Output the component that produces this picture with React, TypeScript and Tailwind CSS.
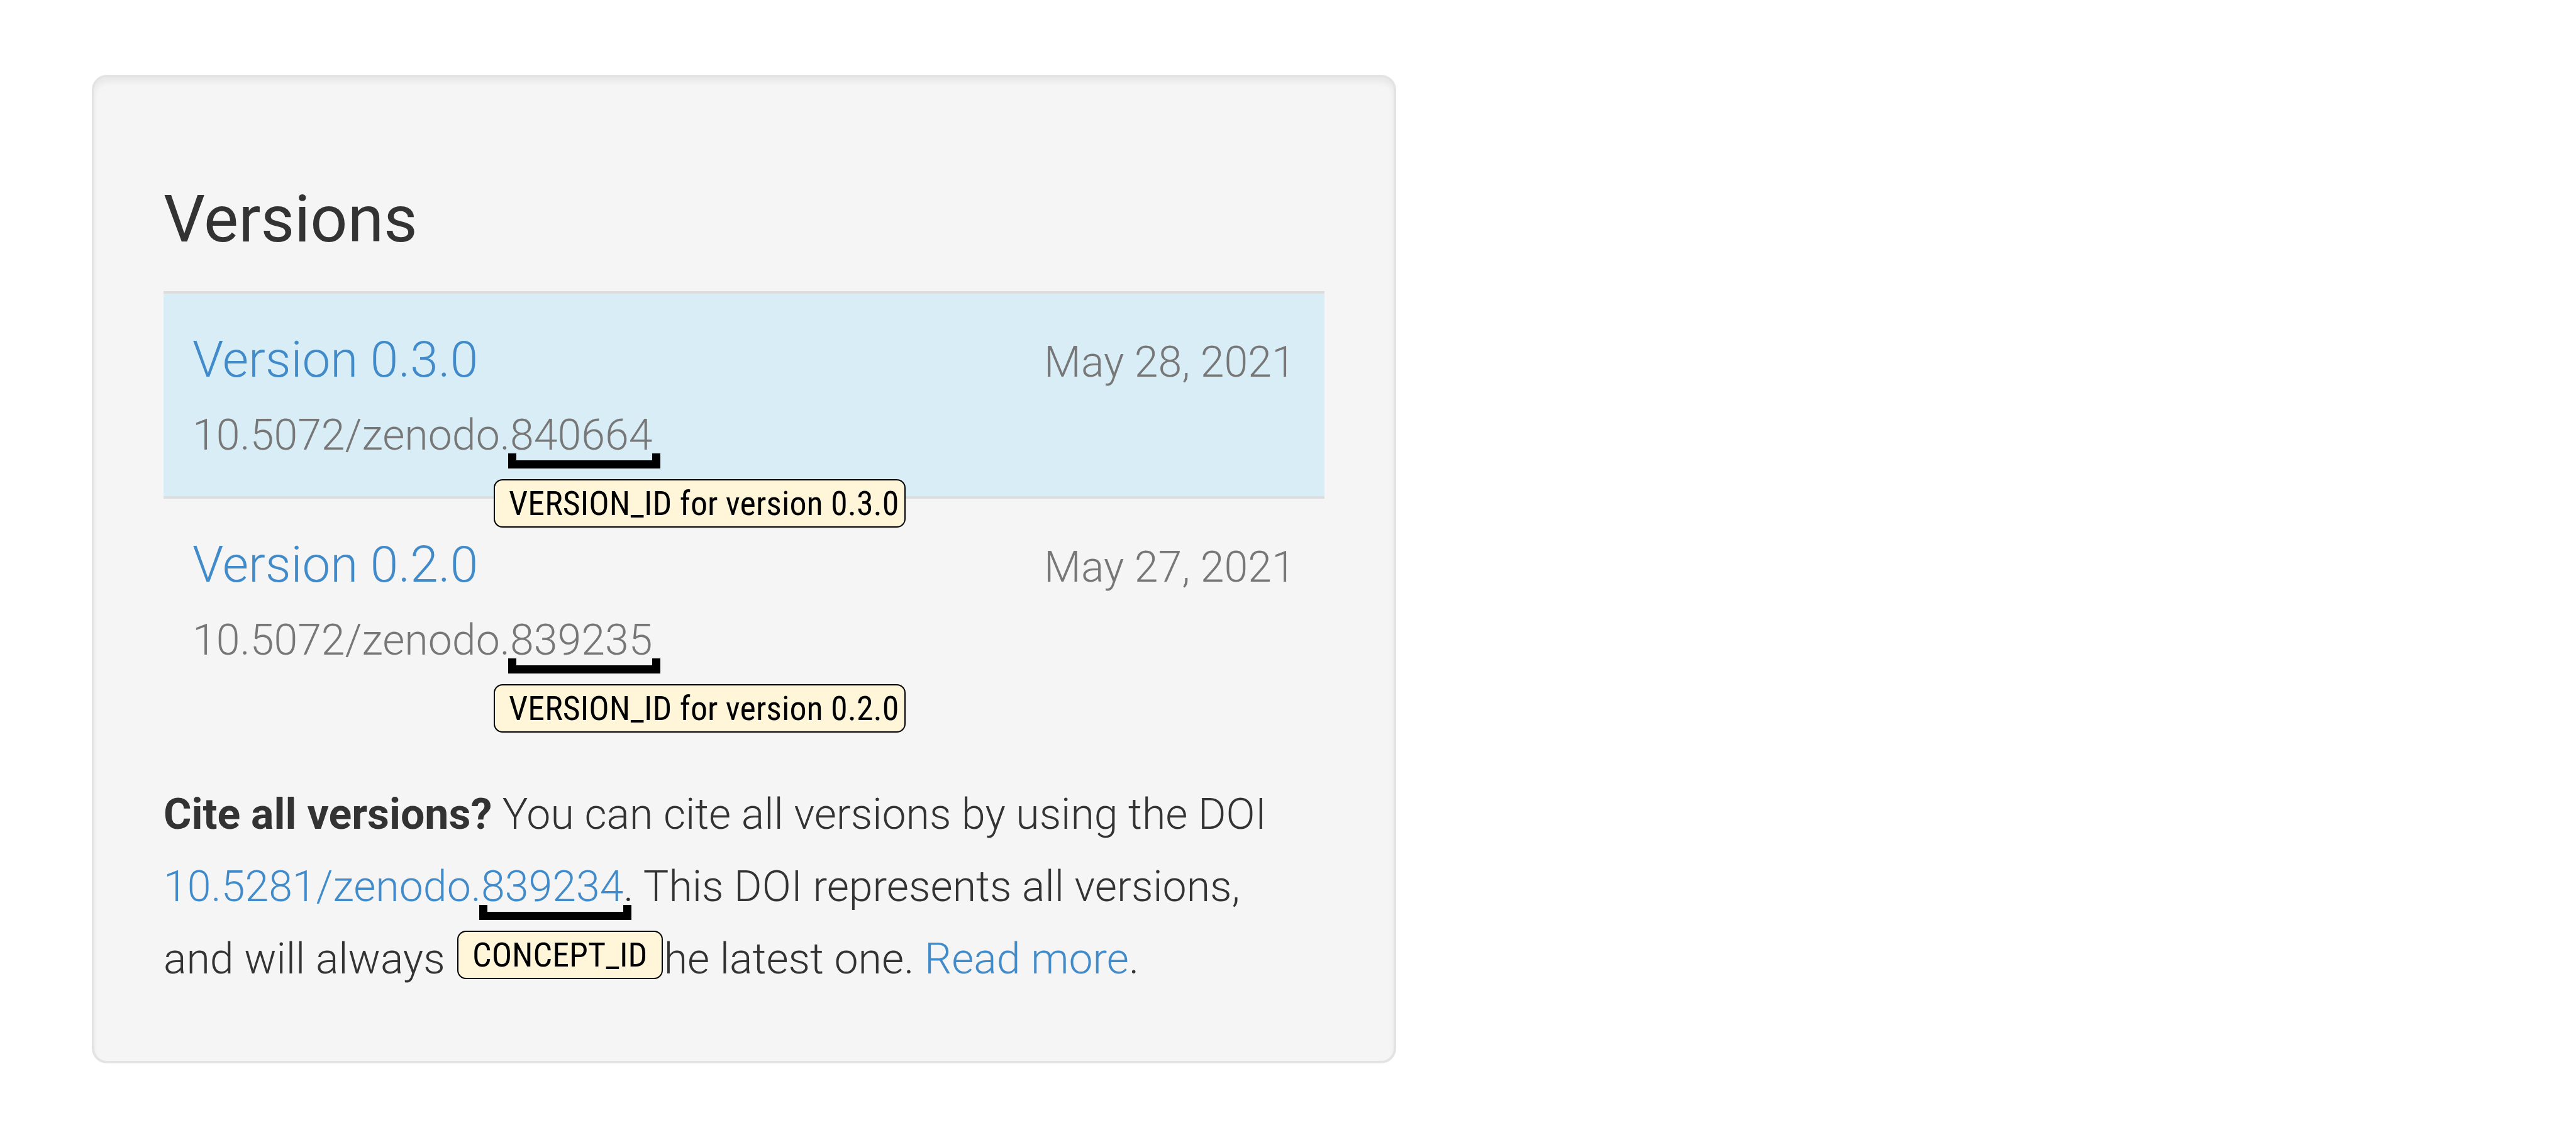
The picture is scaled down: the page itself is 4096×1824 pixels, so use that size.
type AnnotatedIdProps = {
  id: string;
  note: string;
  noteClass: string;
};

/* An identifier suffix with a bracket below it and a callout naming it. */
function AnnotatedId({ id, note, noteClass }: AnnotatedIdProps) {
  return (
    <span className="relative">
      {id}
      <span className="absolute top-[69px] -left-[3px] z-10 h-6 w-[242px] border-x-[13px] border-b-[13px] border-black" />
      <span
        className={
          "absolute top-[110px] z-10 flex h-[77px] items-center rounded-[14px] border-2 border-black bg-[#fff5d8] pl-[22px] font-['Roboto_Condensed','Liberation_Sans_Narrow',Roboto,sans-serif] text-[54px] leading-none font-normal whitespace-nowrap text-black " +
          noteClass
        }
      >
        {note}
      </span>
    </span>
  );
}

const versions = [
  { version: "0.3.0", date: "May 28, 2021", id: "840664", row: "bg-[#d9edf7]" },
  { version: "0.2.0", date: "May 27, 2021", id: "839235", row: "" },
];

export default function App() {
  return (
    <main className="min-h-screen bg-white pt-[119px] pb-[132px] pl-[146px] font-[Roboto,sans-serif] font-light text-[#333]">
      <section className="w-[52.5%] rounded-3xl border-4 border-[#e3e3e3] bg-[#f5f5f5] px-[110px] pt-[170px] pb-[104px] shadow-[inset_0_8px_8px_rgba(0,0,0,0.05)]">
        <h4 className="mb-[58px] text-[104px] leading-[112px] font-normal">Versions</h4>
        <table className="w-full border-separate border-spacing-0 text-[68px] leading-[120px] text-[#777]">
          <tbody>
            {versions.map((v) => (
              <tr key={v.version} className={v.row}>
                <td className="border-t-4 border-[#ddd] pt-[45px] pb-[37px] pl-[46px] align-baseline">
                  <a href="#" className="block text-[80px] text-[#428bca]">
                    Version {v.version}
                  </a>
                  <div>
                    10.5072/zenodo.
                    <AnnotatedId
                      id={v.id}
                      note={`VERSION_ID for version ${v.version}`}
                      noteClass="-left-[26px] w-[655px]"
                    />
                  </div>
                </td>
                <td className="border-t-4 border-[#ddd] pt-[45px] pr-[46px] text-right align-baseline whitespace-nowrap">
                  {v.date}
                </td>
              </tr>
            ))}
          </tbody>
        </table>
        <p className="mt-[123px] text-[68px] leading-[115px]">
          <strong className="font-bold">Cite all versions?</strong> You can cite all versions by using the DOI
          <br />
          <a href="#" className="text-[#428bca]">
            10.5281/zenodo.
            <AnnotatedId id="839234" note="CONCEPT_ID" noteClass="-left-[38px] w-[327px]" />
          </a>
          . This DOI represents all versions,
          <br />
          and will always
          {/* Room for the callout that hangs from the line above */}
          <span className="inline-block w-[348px]" />
          he latest one.{" "}
          <a href="#" className="text-[#428bca]">
            Read more
          </a>
          .
        </p>
      </section>
    </main>
  );
}
